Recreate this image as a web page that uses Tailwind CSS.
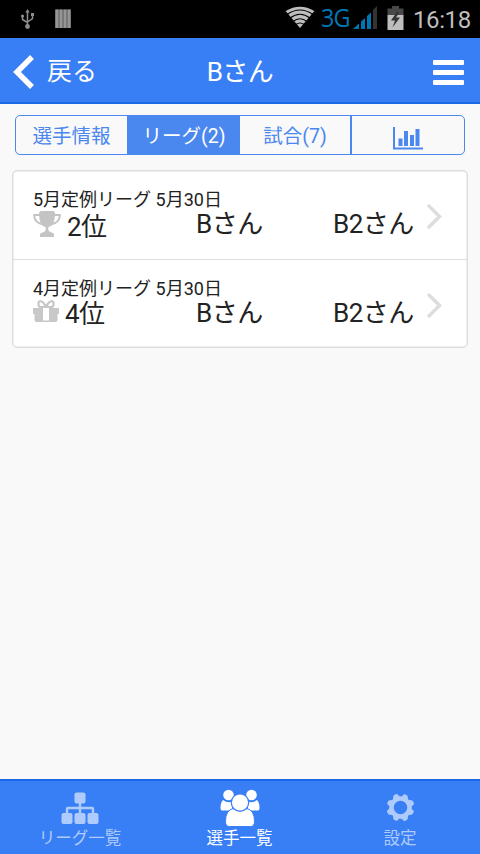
<!DOCTYPE html>
<html lang="ja">
<head>
    <meta charset="UTF-8" />
    <meta name="viewport" content="width=device-width, initial-scale=1.0"/>
    <title>Bさん</title>
    <script src="https://cdn.jsdelivr.net/npm/@tailwindcss/browser@4"></script>
</head>
<body class="flex flex-col h-[854px] w-[480px] overflow-hidden bg-[#f9f9f9] font-normal text-[#222] font-['Roboto','Noto_Sans_CJK_JP',sans-serif] whitespace-nowrap">
    <!-- Status bar -->
    <div class="flex h-[38px] shrink-0 items-start bg-black">
        <svg class="ml-[20px] mt-[9px]" width="16" height="20" viewBox="0 0 16 20" fill="none" stroke="#8c8c8c" stroke-width="1.5">
            <path d="M7.500 17V2M2.500 7v3.500l5 3M12.500 6v3.500l-5 3.500"/>
            <path d="M7.500 0l2.200 3.500H5.300z" fill="#8c8c8c" stroke="none"/>
            <circle cx="7.500" cy="17.500" r="2.400" fill="#8c8c8c" stroke="none"/>
            <circle cx="2.500" cy="7" r="1.600" fill="#8c8c8c" stroke="none"/>
            <path d="M11 4h3v3h-3z" fill="#8c8c8c" stroke="none"/>
        </svg>
        <svg class="ml-[19px] mt-[9px]" width="16" height="20" viewBox="0 0 16 20">
            <path d="M0 .5h16v18.500H0z" fill="#5a5a5a"/>
            <path d="M.5.5h3v18.500h-3zM4.500.5h3v18.500h-3zM8.500.5h3v18.500h-3zM12.500.5h3v18.500h-3z" fill="#959595"/>
        </svg>
        <svg class="ml-[214px] mt-[6px]" width="30" height="23" viewBox="0 0 30 23">
            <path d="M.6 5Q15-3.600 29.400 5L15 22z" fill="#bebebe"/>
            <path d="M2 8.500Q15-.5 28 8.500M5 12Q15 4.500 25 12M8 15.500Q15 10 22 15.500M11 18.500Q15 15.500 19 18.500" fill="none" stroke="#000" stroke-width="1.100"/>
        </svg>
        <span class="ml-[6px] mt-[3px] w-[29px] text-[26px] leading-[28px] tracking-[-1px] text-[#0077b3] font-['Open_Sans','Roboto',sans-serif]"><span class="inline-block origin-left scale-x-90">3G</span></span>
        <svg class="ml-[3px] mt-[6px]" width="24" height="23" viewBox="0 0 24 23" fill="#0077b3">
            <path d="M0 23l6-5.500V23zM8 15.500l4-3.500v11H8zM14 10l4-3.500V23h-4z"/>
            <path d="M20 4l4-4v23h-4z" fill="#333"/>
        </svg>
        <svg class="ml-[10px] mt-[6px]" width="17" height="24" viewBox="0 0 17 24">
            <path d="M5 0h7v2.500h4.500V9H.5V2.500H5z" fill="#484848"/>
            <path d="M.5 9h16v15H.5z" fill="#bebebe"/>
            <path d="M10.500 5L4 14.500h4L5.500 21.500 13 11.500H9L12 7z" fill="#333"/>
        </svg>
        <span class="ml-[9px] mt-[6px] text-[24px] leading-[28px] tracking-[-.4px] text-[#bebebe]">16:18</span>
    </div>

    <!-- Header -->
    <header class="grid h-[66px] shrink-0 grid-cols-3 items-center border-b-2 border-[#1a6ae8] bg-[#387ef5] text-white">
        <a class="flex items-center pl-[13px]">
            <svg class="mt-[3px]" width="22" height="34" viewBox="0 0 22 34" fill="none" stroke="#fff" stroke-width="5.500"><path d="M19 2L4 17l15 15"/></svg>
            <span class="mt-[4px] ml-[12px] text-[25px] leading-[32px]">戻る</span>
        </a>
        <h1 class="mt-[3px] text-center text-[26px] leading-[32px] tracking-[-.5px]">Bさん</h1>
        <button class="mt-[5px] mr-[16px] flex w-[31px] flex-col gap-[5px] justify-self-end">
            <span class="h-[5px] rounded-[1px] bg-white"></span>
            <span class="h-[5px] rounded-[1px] bg-white"></span>
            <span class="h-[5px] rounded-[1px] bg-white"></span>
        </button>
    </header>

    <!-- Content -->
    <main class="grow px-[12px] pt-[11px]">
        <div class="mx-[3px] grid h-[40px] grid-cols-4 overflow-hidden rounded-[5px] border border-[#4a87ee] text-center text-[19.500px] leading-[42px] text-[#4a87ee]">
            <button class="border-r border-[#4a87ee]">選手情報</button>
            <button class="bg-[#4a87ee] text-white">リーグ(2)</button>
            <button class="border-r-2 border-[#4a87ee]">試合(7)</button>
            <button class="flex justify-center pt-[11px]">
                <svg width="30" height="23" viewBox="0 0 30 23" fill="#4a87ee"><path d="M0 0h2v20.500h28v2H0zM5.500 11.500h4V19h-4zM11 4h4v15h-4zM17 8h4v11h-4zM22.500 2h4v17h-4z"/></svg>
            </button>
        </div>

        <ul class="mt-[15px] rounded-[5px] border border-[#ddd] bg-white shadow-[inset_0_0_0_.5px_#ddd]">
            <li class="flex h-[89px] border-b border-[#ddd] pl-[20px] pt-[17px]">
                <div class="w-[163px]">
                    <p class="text-[18px] leading-[24px]">5月定例リーグ 5月30日</p>
                    <div class="-mt-px flex">
                        <svg width="28" height="27" viewBox="0 0 28 27" fill="#c4c4c4">
                            <path d="M6 2.500Q6 0 8 0h12q2 0 2 2.500 0 12-6.500 13.500-.5 2 0 3.500 1 1.500 3 2 2.500.5 2.500 2V26H7v-2.500q0-1.500 2.500-2 2-.5 3-2 .5-1.500 0-3.500Q6 14.500 6 2.500z"/>
                            <path d="M7 4H1.200q-.5 7 8.800 9.500M21 4h5.800q.5 7-8.800 9.500" fill="none" stroke="#c4c4c4" stroke-width="2"/>
                        </svg>
                        <span class="ml-[6px] text-[26px] leading-[32px] tracking-[-.6px]">2位</span>
                    </div>
                </div>
                <span class="mt-[20px] w-[136px] text-[26px] leading-[32px] tracking-[-.5px]">Bさん</span>
                <span class="mt-[20px] w-[95px] pl-px text-[26px] leading-[32px] tracking-[-.5px]">B2さん</span>
                <svg class="mt-[16px]" width="15" height="25" viewBox="0 0 15 25" fill="none" stroke="#ddd" stroke-width="3.500" stroke-linecap="round"><path d="M2 2l10.500 10.500L2 23"/></svg>
            </li>
            <li class="flex h-[87px] pl-[20px] pt-[17px]">
                <div class="w-[163px]">
                    <p class="text-[18px] leading-[24px]">4月定例リーグ 5月30日</p>
                    <div class="-mt-px flex">
                        <svg width="26" height="23" viewBox="0 0 26 23">
                            <path d="M0 8h26v6h-1.500v6q0 2-2 2h-19q-2 0-2-2v-6H0z" fill="#c8c8c8"/>
                            <path d="M10 8h6v12.500h-6z" fill="#fff"/>
                            <path d="M13 7C11 3 9 1.200 7 1.200S4.500 7 8 7zM13 7c2-4 4-5.800 6-5.800S21.500 7 18 7z" fill="none" stroke="#c8c8c8" stroke-width="2.200"/>
                        </svg>
                        <span class="ml-[6px] text-[26px] leading-[29px] tracking-[-.6px]">4位</span>
                    </div>
                </div>
                <span class="mt-[20px] w-[136px] text-[26px] leading-[32px] tracking-[-.5px]">Bさん</span>
                <span class="mt-[20px] w-[95px] pl-px text-[26px] leading-[32px] tracking-[-.5px]">B2さん</span>
                <svg class="mt-[16px]" width="15" height="25" viewBox="0 0 15 25" fill="none" stroke="#ddd" stroke-width="3.500" stroke-linecap="round"><path d="M2 2l10.500 10.500L2 23"/></svg>
            </li>
        </ul>
    </main>

    <!-- Tab bar -->
    <nav class="grid h-[75px] shrink-0 grid-cols-3 border-t-2 border-[#1a6ae8] bg-[#387ef5] text-[16.500px] leading-[24px] text-white">
        <a class="flex flex-col items-center pt-[10px] text-[#afcbfb]">
            <svg width="38" height="36" viewBox="0 0 38 36" fill="#afcbfb">
                <rect x="13.500" y="1.500" width="11" height="11" rx="2"/>
                <rect x=".5" y="22" width="11" height="11" rx="2"/>
                <rect x="13.500" y="22" width="11" height="11" rx="2"/>
                <rect x="26.500" y="22" width="11" height="11" rx="2"/>
                <path d="M6 23v-5q0-1 1-1h24q1 0 1 1v5M19 12v11" fill="none" stroke="#afcbfb" stroke-width="2.500"/>
            </svg>
            <span>リーグ一覧</span>
        </a>
        <a class="flex flex-col items-center pt-[8px] pr-px">
            <svg width="40" height="38" viewBox="0 -2 40 38" fill="#fff">
                <circle cx="8.500" cy="4" r="5.300"/>
                <circle cx="31.500" cy="4" r="5.300"/>
                <path d="M3 9q5.500 4 9 1v9.500H2q-1.500 0-1.500-3 0-5 2.500-7.500zM37 9q-5.500 4-9 1v9.500h10q1.500 0 1.500-3 0-5-2.500-7.500z"/>
                <path d="M13 17.500q7 5 14 0 7.500 2 7.500 13 0 5-4 5h-21q-4 0-4-5 0-11 7.500-13z" stroke="#387ef5"/>
                <circle cx="20" cy="11.500" r="8.700" stroke="#387ef5" stroke-width="1.200"/>
            </svg>
            <span>選手一覧</span>
        </a>
        <a class="flex flex-col items-center pt-[10px] text-[#afcbfb]">
            <svg width="30" height="36" viewBox="-15.500 -16.500 30 36" fill="#afcbfb" stroke="#afcbfb" stroke-linejoin="round">
                <circle r="9" fill="none" stroke-width="4.500"/>
                <!-- eight teeth -->
                <path d="M1.500-10.500l2-2.500 3 1.200.5 3.500zM8.500-7l3.500.5 1.200 3-2.700 2.500zM10.500 1.500l2.500 2-1.200 3-3.500.5zM7 8.500l-.5 3.500-3 1.200-2.500-2.700zM-1.500 10.500l-2 2.500-3-1.200-.5-3.500zM-8.500 7l-3.500-.5-1.200-3 2.700-2.500zM-10.500-1.500l-2.500-2 1.200-3 3.500-.5zM-7-8.500l.5-3.500 3-1.200 2.500 2.700z"/>
            </svg>
            <span>設定</span>
        </a>
    </nav>
</body>
</html>
